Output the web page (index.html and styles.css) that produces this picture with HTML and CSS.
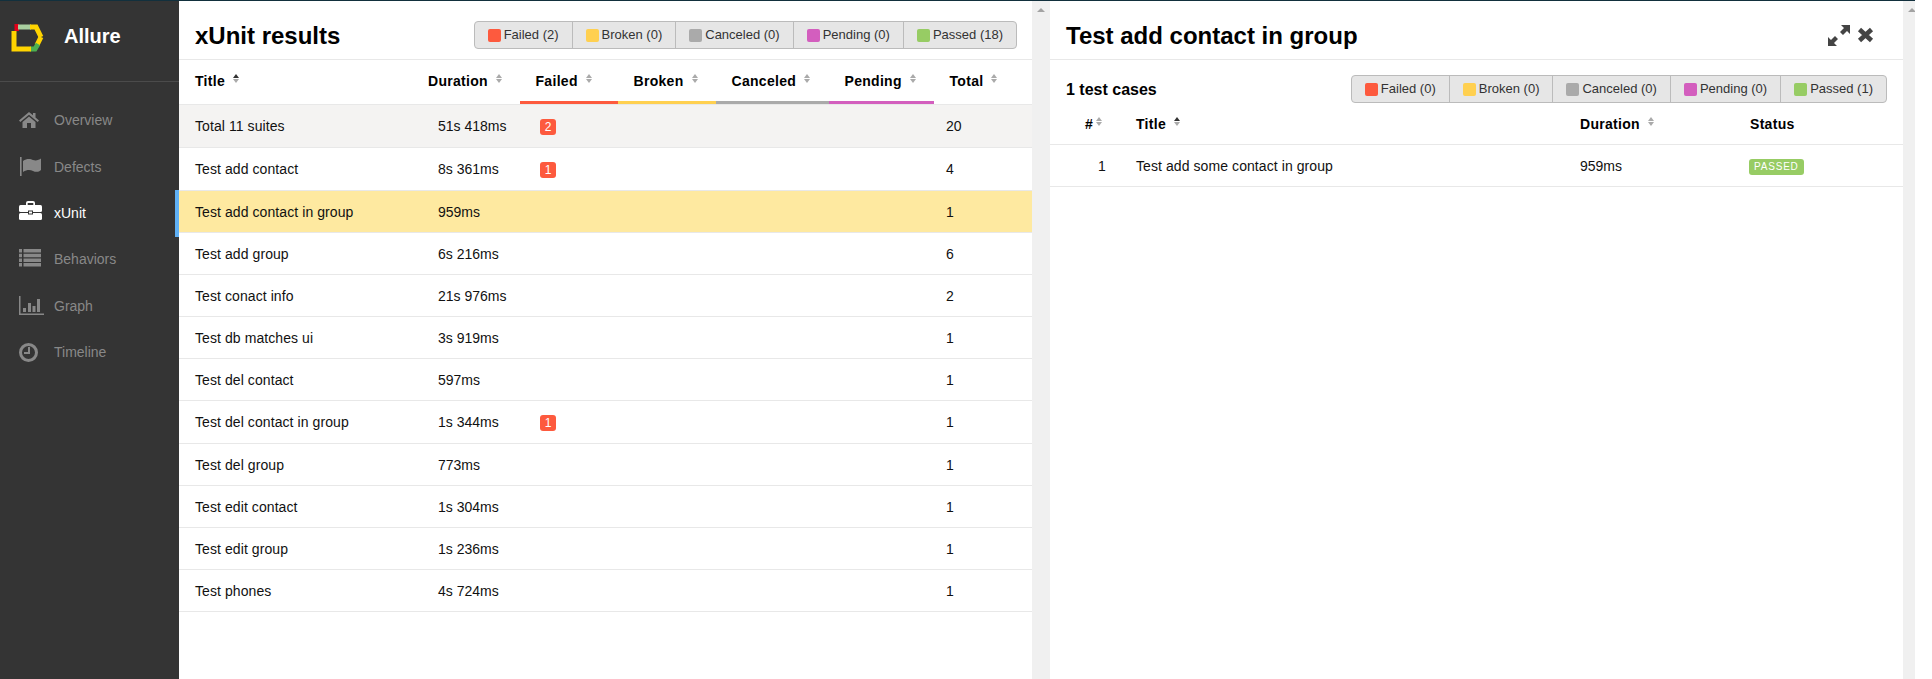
FILE: index.html
```html
<!DOCTYPE html>
<html>

<head>
    <link rel="stylesheet" href="styles.css">
</head>

<body>
    <div class="top-strip"></div>
    <div class="app">
        <nav class="side-nav">
            <div class="brand">
                <svg class="brand-logo" width="33" height="28" viewBox="0 0 33 28">
                    <path d="M3.5 3.5 H8" fill="none" stroke="#e2001a" stroke-width="7" />
                    <path d="M7 3 H20" fill="none" stroke="#a9cf9f" stroke-width="5" />
                    <path d="M19 3 H25 L30 13" fill="none" stroke="#ffd400" stroke-width="5" />
                    <path d="M30 13 L26 21" fill="none" stroke="#ffd400" stroke-width="5" />
                    <path d="M27 20 L24 25 H19" fill="none" stroke="#4caf50" stroke-width="5" />
                    <path d="M20 25 H3 V7" fill="none" stroke="#ffd400" stroke-width="5" />
                </svg>
                <span class="brand-name">Allure</span>
            </div>
            <ul class="nav-list">
                <li class="nav-item">
                    <svg class="nav-icon" viewBox="0 0 26 26">
                        <path d="M10 4 L0 12.5 L1.3 14 L10 6.8 L18.7 14 L20 12.5 L16.5 9.5 V5 H14 V7.3 Z" />
                        <path d="M10 8.5 L3.5 14 V20 H8 V15 H12 V20 H16.5 V14 Z" />
                    </svg>
                    Overview
                </li>
                <li class="nav-item">
                    <svg class="nav-icon" viewBox="0 0 26 26">
                        <rect x="1" y="3" width="1.6" height="19" />
                        <path d="M4 7 C8 4 12 5 14 6 C17 7 20 6 22 4.5 V16 C20 18 17 18.5 14 17 C11 15.5 8 15.5 4 18 Z" />
                    </svg>
                    Defects
                </li>
                <li class="nav-item active">
                    <svg class="nav-icon" viewBox="0 0 26 26">
                        <path d="M7 5 V3 A2 2 0 0 1 9 1 H14 A2 2 0 0 1 16 3 V5 H14.3 V3 H8.7 V5 Z" />
                        <rect y="5" width="23" height="7" rx="1.5" />
                        <rect y="13" width="23" height="7" rx="1.5" />
                        <rect x="9.5" y="11" width="4" height="3" stroke="#333" />
                    </svg>
                    xUnit
                </li>
                <li class="nav-item">
                    <svg class="nav-icon" viewBox="0 0 26 26">
                        <path d="M0 2 H3 V5.5 H0 Z M4.5 2 H22 V5.5 H4.5 Z M0 6.7 H3 V10.2 H0 Z M4.5 6.7 H22 V10.2 H4.5 Z M0 11.4 H3 V14.9 H0 Z M4.5 11.4 H22 V14.9 H4.5 Z M0 16.1 H3 V19.6 H0 Z M4.5 16.1 H22 V19.6 H4.5 Z" />
                    </svg>
                    Behaviors
                </li>
                <li class="nav-item">
                    <svg class="nav-icon" viewBox="0 0 26 26">
                        <path d="M0 3 H1.5 V20.5 H25 V22 H0 Z M4 15 H7 V19 H4 Z M9 10 H12 V19 H9 Z M13.5 13 H16.5 V19 H13.5 Z M18 6 H21 V19 H18 Z" />
                    </svg>
                    Graph
                </li>
                <li class="nav-item">
                    <svg class="nav-icon" viewBox="0 0 26 26">
                        <circle cx="9.5" cy="12.5" r="8" fill="none" stroke="currentColor" stroke-width="3" />
                        <path d="M10 7 V13 H5" fill="none" stroke="currentColor" stroke-width="2" />
                    </svg>
                    Timeline
                </li>
            </ul>
        </nav>

        <section class="pane">
            <div class="pane-body">
                <header class="pane-heading">
                    <h2>xUnit results</h2>
                    <div class="status-filter">
                        <span class="status-btn"><i class="swatch failed"></i>Failed (2)</span>
                        <span class="status-btn"><i class="swatch broken"></i>Broken (0)</span>
                        <span class="status-btn"><i class="swatch canceled"></i>Canceled (0)</span>
                        <span class="status-btn"><i class="swatch pending"></i>Pending (0)</span>
                        <span class="status-btn"><i class="swatch passed"></i>Passed (18)</span>
                    </div>
                </header>
                <table class="data-table suites">
                    <colgroup>
                        <col class="col-title">
                        <col class="col-duration">
                        <col class="col-failed">
                        <col class="col-broken">
                        <col class="col-canceled">
                        <col class="col-pending">
                        <col class="col-total">
                    </colgroup>
                    <thead>
                        <tr>
                            <th class="first">Title<svg class="sort-icon" viewBox="0 0 6 9"><path class="up sorted" d="M3 0 L6 4 H0 Z" /><path d="M0 5 H6 L3 9 Z" /></svg></th>
                            <th class="duration">Duration<svg class="sort-icon" viewBox="0 0 6 9"><path d="M3 0 L6 4 H0 Z" /><path d="M0 5 H6 L3 9 Z" /></svg></th>
                            <th class="line-failed">Failed<svg class="sort-icon" viewBox="0 0 6 9"><path d="M3 0 L6 4 H0 Z" /><path d="M0 5 H6 L3 9 Z" /></svg></th>
                            <th class="line-broken">Broken<svg class="sort-icon" viewBox="0 0 6 9"><path d="M3 0 L6 4 H0 Z" /><path d="M0 5 H6 L3 9 Z" /></svg></th>
                            <th class="line-canceled">Canceled<svg class="sort-icon" viewBox="0 0 6 9"><path d="M3 0 L6 4 H0 Z" /><path d="M0 5 H6 L3 9 Z" /></svg></th>
                            <th class="line-pending">Pending<svg class="sort-icon" viewBox="0 0 6 9"><path d="M3 0 L6 4 H0 Z" /><path d="M0 5 H6 L3 9 Z" /></svg></th>
                            <th>Total<svg class="sort-icon" viewBox="0 0 6 9"><path d="M3 0 L6 4 H0 Z" /><path d="M0 5 H6 L3 9 Z" /></svg></th>
                        </tr>
                    </thead>
                    <tbody>
                        <tr class="total-row badge-row">
                            <td class="first">Total 11 suites</td>
                            <td class="duration">51s 418ms</td>
                            <td class="count"><span class="badge">2</span></td>
                            <td></td>
                            <td></td>
                            <td></td>
                            <td class="sum">20</td>
                        </tr>
                        <tr class="badge-row">
                            <td class="first">Test add contact</td>
                            <td class="duration">8s 361ms</td>
                            <td class="count"><span class="badge">1</span></td>
                            <td></td>
                            <td></td>
                            <td></td>
                            <td class="sum">4</td>
                        </tr>
                        <tr class="selected">
                            <td class="first">Test add contact in group</td>
                            <td class="duration">959ms</td>
                            <td></td>
                            <td></td>
                            <td></td>
                            <td></td>
                            <td class="sum">1</td>
                        </tr>
                        <tr>
                            <td class="first">Test add group</td>
                            <td class="duration">6s 216ms</td>
                            <td></td>
                            <td></td>
                            <td></td>
                            <td></td>
                            <td class="sum">6</td>
                        </tr>
                        <tr>
                            <td class="first">Test conact info</td>
                            <td class="duration">21s 976ms</td>
                            <td></td>
                            <td></td>
                            <td></td>
                            <td></td>
                            <td class="sum">2</td>
                        </tr>
                        <tr>
                            <td class="first">Test db matches ui</td>
                            <td class="duration">3s 919ms</td>
                            <td></td>
                            <td></td>
                            <td></td>
                            <td></td>
                            <td class="sum">1</td>
                        </tr>
                        <tr>
                            <td class="first">Test del contact</td>
                            <td class="duration">597ms</td>
                            <td></td>
                            <td></td>
                            <td></td>
                            <td></td>
                            <td class="sum">1</td>
                        </tr>
                        <tr class="badge-row">
                            <td class="first">Test del contact in group</td>
                            <td class="duration">1s 344ms</td>
                            <td class="count"><span class="badge">1</span></td>
                            <td></td>
                            <td></td>
                            <td></td>
                            <td class="sum">1</td>
                        </tr>
                        <tr>
                            <td class="first">Test del group</td>
                            <td class="duration">773ms</td>
                            <td></td>
                            <td></td>
                            <td></td>
                            <td></td>
                            <td class="sum">1</td>
                        </tr>
                        <tr>
                            <td class="first">Test edit contact</td>
                            <td class="duration">1s 304ms</td>
                            <td></td>
                            <td></td>
                            <td></td>
                            <td></td>
                            <td class="sum">1</td>
                        </tr>
                        <tr>
                            <td class="first">Test edit group</td>
                            <td class="duration">1s 236ms</td>
                            <td></td>
                            <td></td>
                            <td></td>
                            <td></td>
                            <td class="sum">1</td>
                        </tr>
                        <tr>
                            <td class="first">Test phones</td>
                            <td class="duration">4s 724ms</td>
                            <td></td>
                            <td></td>
                            <td></td>
                            <td></td>
                            <td class="sum">1</td>
                        </tr>
                    </tbody>
                </table>
            </div>
            <div class="scrollbar"><i class="scroll-arrow"></i></div>
        </section>

        <section class="pane right-pane">
            <div class="pane-body">
                <header class="pane-heading">
                    <h2>Test add contact in group</h2>
                    <div class="pane-actions">
                        <svg width="22" height="21" viewBox="0 0 22 21">
                            <path d="M13 0 H22 V9 L19 6 L15 10 L12 7 L16 3 Z M0 21 V12 L3 15 L7 11 L10 14 L6 18 L9 21 Z" fill="#444" />
                        </svg>
                        <svg width="17" height="16" viewBox="0 0 17 16">
                            <path d="M2.5 2.5 L14.5 13.5 M14.5 2.5 L2.5 13.5" fill="none" stroke="#444" stroke-width="4.6" />
                        </svg>
                    </div>
                </header>
                <div class="cases-bar">
                    <h3>1 test cases</h3>
                    <div class="status-filter">
                        <span class="status-btn"><i class="swatch failed"></i>Failed (0)</span>
                        <span class="status-btn"><i class="swatch broken"></i>Broken (0)</span>
                        <span class="status-btn"><i class="swatch canceled"></i>Canceled (0)</span>
                        <span class="status-btn"><i class="swatch pending"></i>Pending (0)</span>
                        <span class="status-btn"><i class="swatch passed"></i>Passed (1)</span>
                    </div>
                </div>
                <table class="data-table cases">
                    <colgroup>
                        <col class="col-num">
                        <col class="col-name">
                        <col class="col-time">
                        <col class="col-status">
                    </colgroup>
                    <thead>
                        <tr>
                            <th class="num">#<svg class="sort-icon tight" viewBox="0 0 6 9"><path d="M3 0 L6 4 H0 Z" /><path d="M0 5 H6 L3 9 Z" /></svg></th>
                            <th>Title<svg class="sort-icon" viewBox="0 0 6 9"><path class="up sorted" d="M3 0 L6 4 H0 Z" /><path d="M0 5 H6 L3 9 Z" /></svg></th>
                            <th>Duration<svg class="sort-icon" viewBox="0 0 6 9"><path d="M3 0 L6 4 H0 Z" /><path d="M0 5 H6 L3 9 Z" /></svg></th>
                            <th>Status</th>
                        </tr>
                    </thead>
                    <tbody>
                        <tr>
                            <td class="num">1</td>
                            <td class="first-text">Test add some contact in group</td>
                            <td>959ms</td>
                            <td class="status-cell"><span class="label-passed">Passed</span></td>
                        </tr>
                    </tbody>
                </table>
            </div>
            <div class="scrollbar"><i class="scroll-arrow"></i></div>
        </section>
    </div>
</body>

</html>
```

FILE: styles.css
```css
body {
    margin: 0;
    background-color: #fff;
    font-family: "Liberation Sans", Arial, sans-serif;
    font-size: 14px;
    line-height: 21px;
    color: #111;
}

.top-strip {
    width: 1915px;
    height: 1px;
    background-color: #12303d;
}

.app {
    display: flex;
    width: 1915px;
    height: 678px;
    overflow: hidden;
}

/* side nav */
.side-nav {
    flex: none;
    width: 179px;
    background-color: #343434;
    color: #888;
}

.brand {
    display: flex;
    align-items: center;
    height: 80px;
    border-bottom: 1px solid #4b4b4b;
    box-sizing: content-box;
}

.brand-logo {
    margin: -7px 0 0 11px;
}

.brand-name {
    margin: -9px 0 0 20px;
    font-size: 20px;
    font-weight: bold;
    color: #fff;
}

.nav-list {
    list-style: none;
    margin: 0;
    padding: 15.5px 0 0;
}

.nav-item {
    display: flex;
    align-items: center;
    height: 46.4px;
    padding-left: 19px;
}

.nav-item.active {
    color: #fff;
    box-shadow: inset -4px 0 0 #5fb0f5;
}

.nav-icon {
    flex: none;
    width: 26px;
    height: 26px;
    margin-right: 9px;
    fill: #888;
}

.nav-item.active .nav-icon {
    fill: #fff;
}

/* panes */
.pane {
    flex: none;
    display: flex;
    width: 871px;
}

.pane-body {
    flex: none;
    width: 853px;
}

.scrollbar {
    flex: none;
    display: flex;
    justify-content: center;
    width: 18px;
    padding-top: 7px;
    box-sizing: border-box;
    background-color: #f0f0f0;
}

.scroll-arrow {
    width: 0;
    height: 0;
    border-left: 4px solid transparent;
    border-right: 4px solid transparent;
    border-bottom: 4px solid #a3a3a3;
}

.pane-heading {
    display: flex;
    align-items: center;
    justify-content: space-between;
    height: 48px;
    padding: 10px 16px 0;
    border-bottom: 1px solid #e8e8e8;
}

.pane-heading h2 {
    margin: 0;
    font-size: 24px;
    font-weight: bold;
    color: #000;
}

.pane-heading .status-filter {
    margin-right: -1px;
}

.pane-actions {
    display: flex;
    align-items: center;
    gap: 7px;
    margin-right: 13px;
}

.cases-bar {
    display: flex;
    align-items: center;
    justify-content: space-between;
    height: 30px;
    padding: 14px 16px 0;
}

.cases-bar h3 {
    margin: 0;
    font-size: 16px;
    font-weight: bold;
    color: #000;
}

/* status filter */
.status-filter {
    display: flex;
    height: 26px;
    border: 1px solid #bbb;
    border-radius: 4px;
    background-color: #e6e6e6;
    font-size: 13px;
    line-height: 26px;
    color: #333;
}

.status-btn {
    display: flex;
    align-items: center;
    padding: 0 13px;
    border-left: 1px solid #bbb;
}

.status-btn:first-child {
    border-left: none;
}

.swatch {
    width: 13px;
    height: 13px;
    margin-right: 3px;
    border-radius: 2px;
}

.swatch.failed {
    background-color: #fd5a3e;
}

.swatch.broken {
    background-color: #ffd050;
}

.swatch.canceled {
    background-color: #aaa;
}

.swatch.pending {
    background-color: #d35ebe;
}

.swatch.passed {
    background-color: #97cc64;
}

/* tables */
.data-table {
    width: 853px;
    table-layout: fixed;
    border-collapse: separate;
    border-spacing: 0;
}

.data-table th {
    height: 44px;
    padding: 0 0 1px 12px;
    box-sizing: border-box;
    border-bottom: 1px solid #e8e8e8;
    text-align: left;
    font-weight: bold;
    letter-spacing: 0.3px;
    color: #000;
    background-repeat: no-repeat;
    background-position: bottom;
    background-size: 100% 3px;
}

.suites th {
    height: 45px;
    padding-left: 15.5px;
}

.cases th {
    height: 41px;
    padding-bottom: 0;
}

.data-table td {
    padding: 11px 0 9px 12px;
    border-bottom: 1px solid #e8e8e8;
    vertical-align: middle;
}

.badge-row td {
    padding-top: 10px;
    padding-bottom: 10px;
}

.col-title {
    width: 239px;
}

.col-duration {
    width: 102px;
}

.col-failed,
.col-broken {
    width: 98px;
}

.col-canceled {
    width: 113px;
}

.col-pending {
    width: 105px;
}

.col-total {
    width: 98px;
}

.col-num {
    width: 74px;
}

.col-name {
    width: 444px;
}

.col-time {
    width: 170px;
}

.col-status {
    width: 165px;
}

.data-table .first {
    padding-left: 16px;
}

.data-table td.first,
.data-table td.first-text {
    letter-spacing: 0.08px;
}

.suites th.duration {
    padding-left: 10px;
}

.suites td.duration {
    padding-left: 20px;
}

.suites td.count {
    padding: 11px 0 10px 20px;
}

.data-table td.sum {
    padding-left: 12px;
}

.line-failed {
    background-image: linear-gradient(#fd5a3e, #fd5a3e);
}

.line-broken {
    background-image: linear-gradient(#ffd050, #ffd050);
}

.line-canceled {
    background-image: linear-gradient(#aaa, #aaa);
}

.line-pending {
    background-image: linear-gradient(#d35ebe, #d35ebe);
}

.cases th.num {
    padding-left: 35px;
}

.cases td.num {
    padding-left: 48px;
}

.cases td.status-cell {
    padding-left: 11px;
}

.total-row td {
    background-color: #f4f3f2;
}

.selected td {
    background-color: #fee9a0;
}

.sort-icon {
    width: 6px;
    height: 9px;
    margin-left: 8px;
    vertical-align: 3px;
    fill: #aaa;
}

.sort-icon.tight {
    margin-left: 3px;
}

.sort-icon .sorted {
    fill: #333;
}

.badge {
    display: inline-block;
    width: 16px;
    height: 16px;
    border-radius: 3px;
    background-color: #fd5a3e;
    color: #fff;
    font-size: 12px;
    line-height: 16px;
    text-align: center;
    vertical-align: middle;
}

.label-passed {
    display: inline-block;
    padding: 0 5px;
    border-radius: 3px;
    background-color: #97cc64;
    color: #fff;
    font-size: 10px;
    line-height: 16px;
    letter-spacing: 0.8px;
    text-transform: uppercase;
    vertical-align: middle;
}
```
